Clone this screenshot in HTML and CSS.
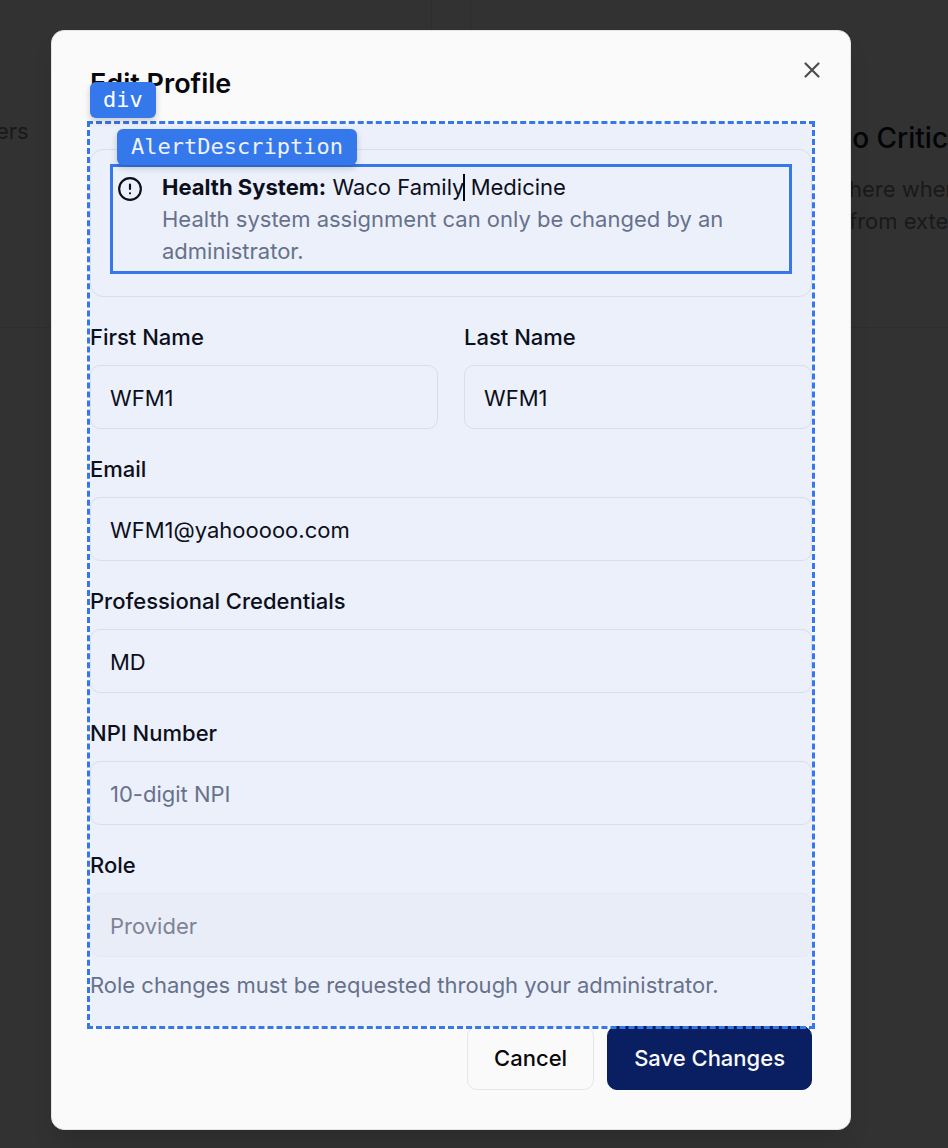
FILE: index.html
```html
<!DOCTYPE html>
<html lang="en">
<head>
<meta charset="utf-8">
<title>Edit Profile</title>
<link rel="stylesheet" href="styles.css">
</head>
<body>
<div class="page" aria-hidden="true">
  <section class="card card-left"><p class="card-text">ers</p></section>
  <section class="card card-right">
    <h3 class="card-title">No Critic</h3>
    <p class="card-text">here wher</p>
    <p class="card-text">from exte</p>
  </section>
</div>
<main class="backdrop">
  <div class="modal" role="dialog" aria-labelledby="title">
    <header class="header">
      <h2 class="title" id="title">Edit Profile</h2>
      <button class="close" type="button" aria-label="Close">
        <svg viewBox="0 0 24 24" width="26" height="26" fill="none" stroke="currentColor" stroke-width="2" stroke-linecap="round"><path d="M18 6 6 18M6 6l12 12"/></svg>
      </button>
    </header>
    <form>
      <div class="fields">
        <div class="alert" role="alert">
          <div class="description">
            <svg class="alert-icon" viewBox="0 0 24 24" width="26" height="26" fill="none" stroke="currentColor" stroke-width="2" stroke-linecap="round"><circle cx="12" cy="12" r="10"/><path d="M12 8v4M12 16h.01"/></svg>
            <div>
              <p class="system"><strong>Health System:</strong> Waco Family<span class="caret"></span> Medicine</p>
              <p class="muted">Health system assignment can only be changed by an administrator.</p>
            </div>
            <span class="tag tag-description">AlertDescription</span>
          </div>
        </div>
        <div class="row">
          <div class="field"><label for="first">First Name</label><input id="first" type="text" value="WFM1"></div>
          <div class="field"><label for="last">Last Name</label><input id="last" type="text" value="WFM1"></div>
        </div>
        <div class="field"><label for="email">Email</label><input id="email" type="email" value="WFM1@yahooooo.com"></div>
        <div class="field"><label for="cred">Professional Credentials</label><input id="cred" type="text" value="MD"></div>
        <div class="field"><label for="npi">NPI Number</label><input id="npi" type="text" placeholder="10-digit NPI"></div>
        <div class="field"><label for="role">Role</label><input id="role" type="text" value="Provider" disabled><p class="muted hint">Role changes must be requested through your administrator.</p></div>
        <div class="highlight"></div>
        <span class="tag tag-div">div</span>
      </div>
      <footer class="actions">
        <button class="button" type="button">Cancel</button>
        <button class="button primary" type="submit">Save Changes</button>
      </footer>
    </form>
  </div>
</main>
</body>
</html>
```
FILE: styles.css
```css
* { box-sizing: border-box; }
body {
  margin: 0;
  position: relative;
  overflow-x: hidden;
  background: #323232;
  color: #09090b;
  font: 400 22px/32px Inter, sans-serif;
}
h2, h3, p { margin: 0; }
svg { display: block; }

/* Dimmed dashboard behind the dialog */
.page {
  position: absolute;
  inset: 0;
  display: grid;
  grid-template-columns: 432px 1fr;
  grid-template-rows: 328px;
  gap: 38px;
  overflow: hidden;
  color: #18191b;
}
.card { border: 1px solid #2d2d2d; border-top: 0; overflow: hidden; white-space: nowrap; }
.card-left { border-left: 0; padding-top: 115px; }
.card-left .card-text { margin-left: -4px; }
.card-right { border-right: 0; padding: 121px 0 0 378px; }
.card-title { margin: 0 0 18px -18px; font-size: 28px; line-height: 34px; font-weight: 500; color: #030407; }

.backdrop { position: relative; padding: 30px 97px 18px 51px; }
.modal {
  max-width: 800px;
  padding: 39px 38px;
  border: 1px solid #e4e4e4;
  border-radius: 13px;
  background: #fafafa;
  box-shadow: 0 16px 24px -6px rgba(0, 0, 0, .15);
}
.header { display: flex; justify-content: space-between; align-items: flex-start; margin-bottom: 26px; }
.title { font-size: 27px; line-height: 28px; font-weight: 600; }
.close { margin: -13px -13px 0 0; padding: 0; border: 0; background: none; color: #4e4e4e; }

.fields { position: relative; display: flex; flex-direction: column; gap: 26px; padding: 25px 0; }
.alert { padding: 17px 22px 25px; border: 1px solid #e6e6e8; border-radius: 13px; }
.description { position: relative; display: grid; grid-template-columns: 26px 1fr; gap: 19px; padding: 4px; }
.description::after { content: ""; position: absolute; inset: -3px; border: 3px solid #3578eb; z-index: 2; }
.alert-icon { margin-top: 5px; }
.muted { color: #6b7284; }
.caret { position: relative; }
.caret::after { content: ""; position: absolute; left: -1px; top: 0; width: 2px; height: 27px; background: #000; }

.row { display: grid; grid-template-columns: 1fr 1fr; gap: 26px; }
.field { display: flex; flex-direction: column; }
label { margin-bottom: 14px; line-height: 28px; font-weight: 500; }
input {
  width: 100%;
  height: 64px;
  padding: 2px 19px 0;
  border: 1px solid #e6e6e8;
  border-radius: 10px;
  background: transparent;
  color: inherit;
  font: inherit;
}
input::placeholder { color: #6b7284; opacity: 1; }
input:disabled { background: #f7f7f7; border-color: #f2f2f3; color: #85858d; }
.hint { margin-top: 12px; }

/* Inspector overlays */
.highlight { position: absolute; inset: -3px; border: 3px dashed #3578eb; background: rgba(50, 110, 250, .07) padding-box; pointer-events: none; }
.tag {
  position: absolute;
  z-index: 3;
  padding: 0 13px;
  border-radius: 6px;
  background: #3578eb;
  color: #fff;
  font: 22px/36px "DejaVu Sans Mono", monospace;
  box-shadow: 0 3px 6px rgba(0, 0, 0, .2);
}
.tag-div { left: 0; top: -42px; }
.tag-description { left: 4px; top: -38px; padding: 0 14px; color: #edf2fc; }

.actions { display: flex; justify-content: flex-end; gap: 13px; }
.button { height: 64px; padding: 0 26px; border: 1px solid #e6e6e8; border-radius: 10px; background: #fafafa; color: #09090b; font: inherit; font-weight: 500; }
.primary { border-color: #0a1f62; background: #0a1f62; color: #fafafa; }
```
